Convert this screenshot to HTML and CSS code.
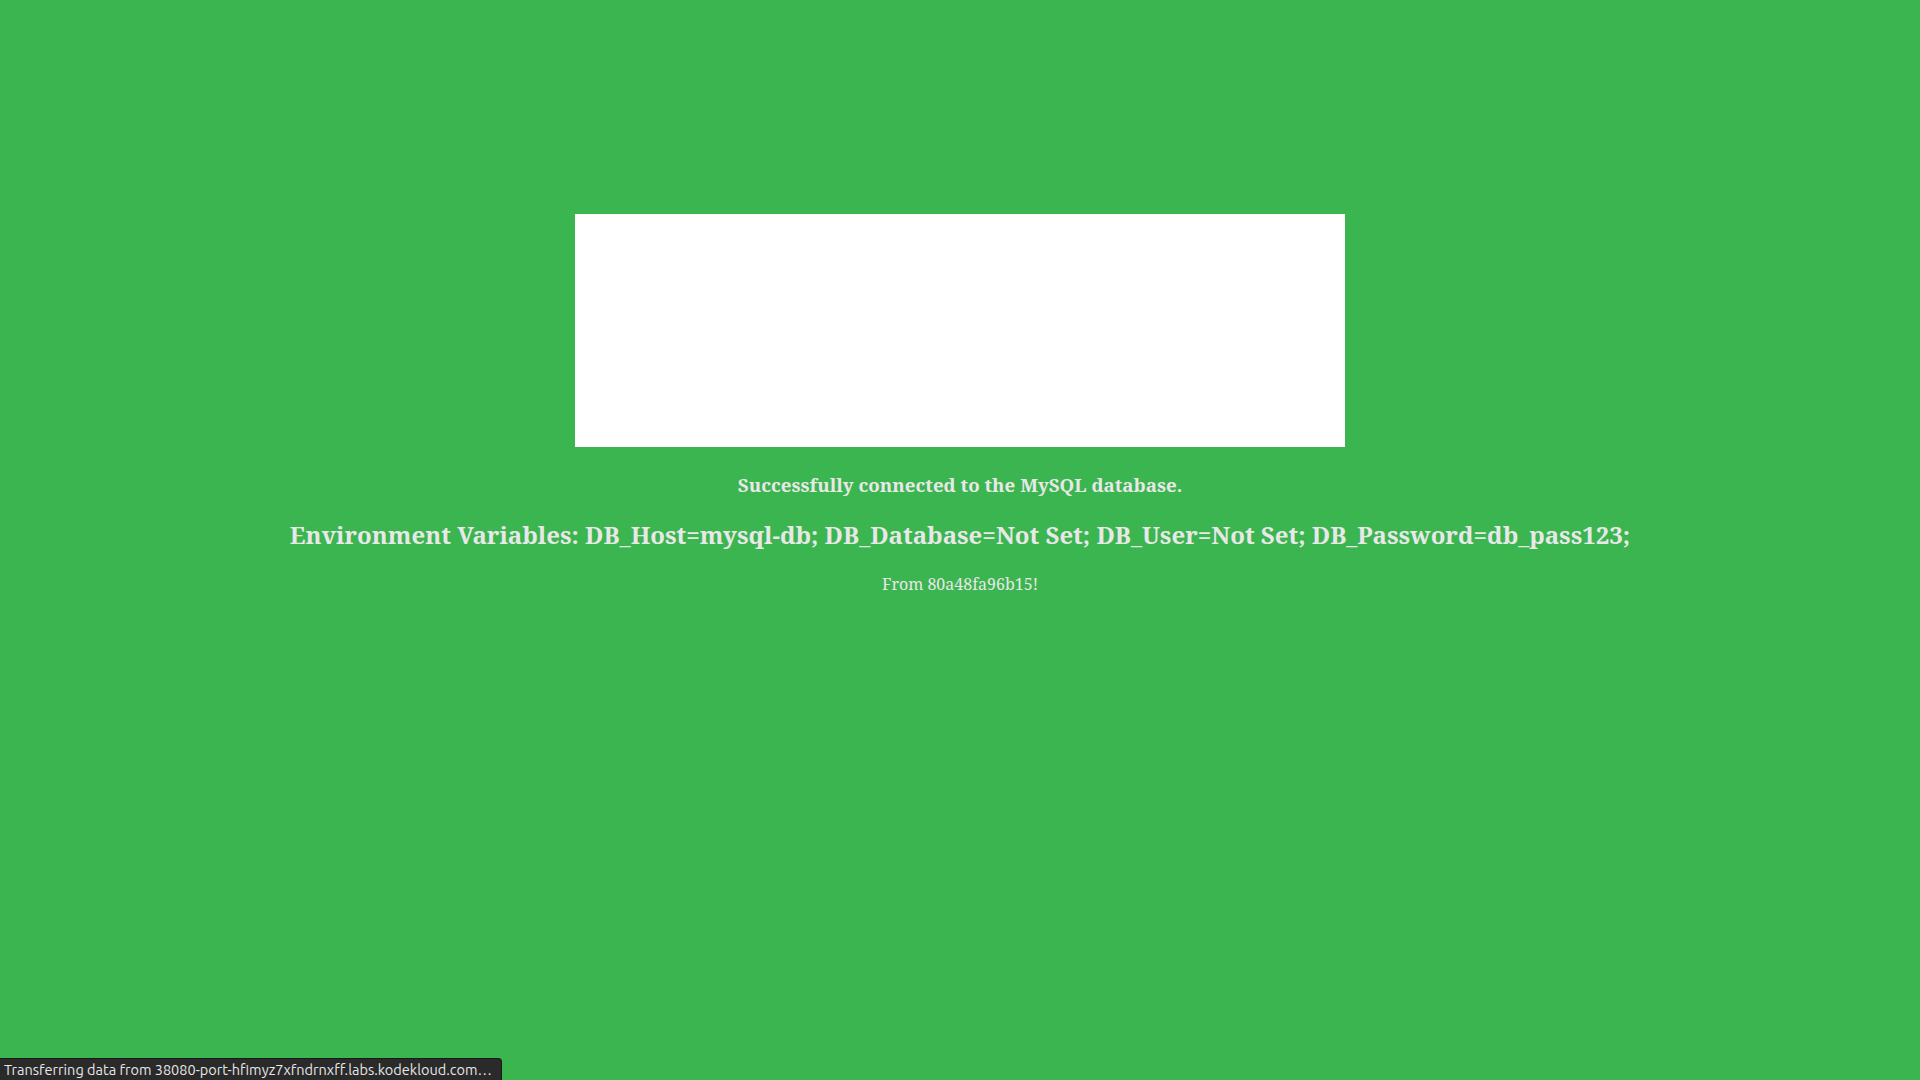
FILE: index.html
```html
<!DOCTYPE html>
<html>
<head>
<meta charset="utf-8">
<link rel="stylesheet" href="styles.css">
</head>
<body>
<div class="page">
  <div class="banner"></div>
  <h3 class="status">Successfully connected to the MySQL database.</h3>
  <h2 class="env">Environment Variables: DB_Host=mysql-db; DB_Database=Not Set; DB_User=Not Set; DB_Password=db_pass123;</h2>
  <p class="from">From 80a48fa96b15!</p>
</div>
<div class="statusbar">Transferring data from 38080-port-hfimyz7xfndrnxff.labs.kodekloud.com…</div>
</body>
</html>
```
FILE: styles.css
```css
html, body {
  margin: 0;
  padding: 0;
  height: 100%;
}
body {
  background: #3bb54f;
  font-family: "Noto Serif", "DejaVu Serif", "Liberation Serif", serif;
  color: #e8e8e8;
}
.page {
  display: flex;
  flex-direction: column;
  align-items: center;
  padding-top: 214px;
  text-align: center;
}
.banner {
  width: 770px;
  height: 233px;
  background: #ffffff;
}
.status {
  margin: 26px 0 0;
  font-size: 18.72px;
  font-weight: bold;
  line-height: 1.3;
}
.env {
  margin: 22px 0 0;
  font-size: 24px;
  font-weight: bold;
  line-height: 1.3;
}
.from {
  margin: 23px 0 0;
  font-size: 16px;
  line-height: 1.3;
}
.statusbar {
  position: fixed;
  left: 0;
  bottom: 0;
  height: 21px;
  line-height: 21px;
  padding: 0 9px 0 4px;
  background: #2a2a2a;
  color: #e6e6e6;
  font-family: "Ubuntu", "Noto Sans", "DejaVu Sans", sans-serif;
  font-size: 14.5px;
  border-top-right-radius: 4px;
  border-top: 1px solid #1a1a1a;
  border-right: 1px solid #1a1a1a;
  white-space: nowrap;
}
```
